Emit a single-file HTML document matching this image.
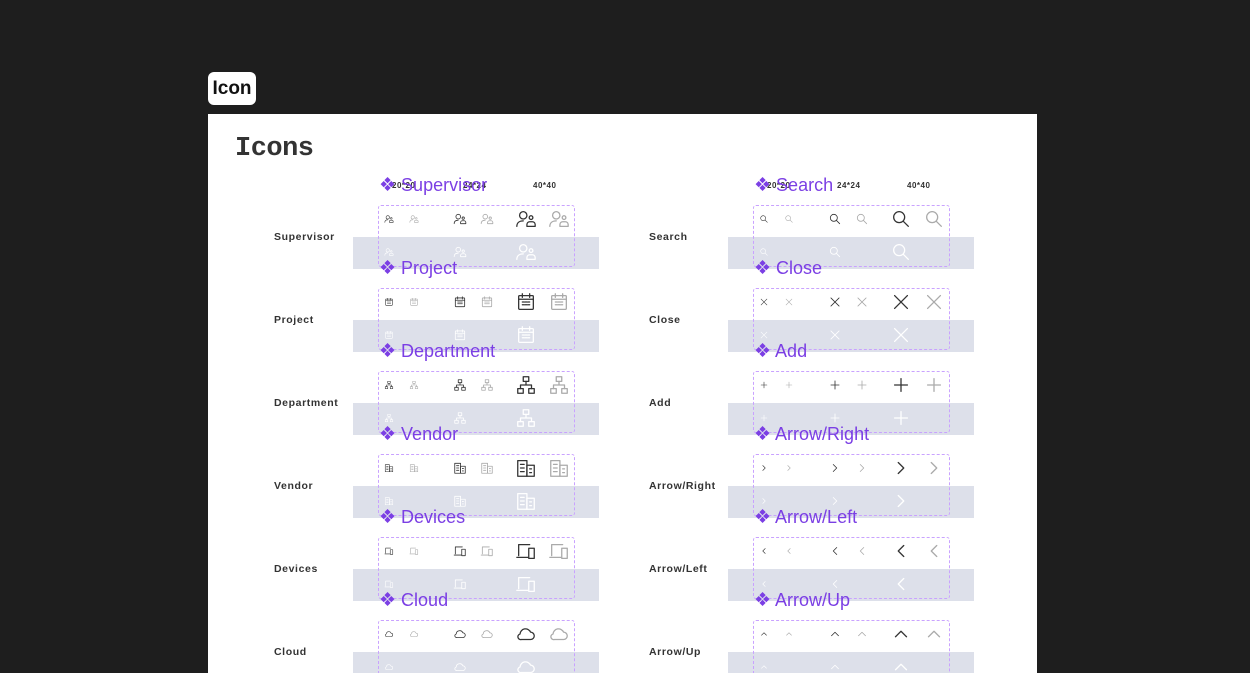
<!DOCTYPE html>
<html style="overflow:hidden"><head><meta charset="utf-8"><style>
*{margin:0;padding:0;box-sizing:border-box}
html,body{width:1250px;height:673px;overflow:hidden}
body{background:#1e1e1e;position:relative;font-family:"Liberation Sans",sans-serif}
.tab{position:absolute;left:208px;top:72px;width:48px;height:33px;background:#fff;border-radius:6px;font-size:19px;font-weight:bold;line-height:33px;text-align:center;color:#111}
.card{position:absolute;left:208px;top:114px;width:829px;height:559px;background:#fff}
h1{position:absolute;left:235px;top:134px;font-family:"Liberation Mono",monospace;font-size:27px;font-weight:bold;color:#333;letter-spacing:-0.5px}
.row{position:absolute;width:700px;height:83px}
.lbl{position:absolute;top:46px;font-size:10.5px;font-weight:bold;color:#333;letter-spacing:.6px}
.band{position:absolute;top:52px;width:246px;height:32px;background:#dde0ea}
.box{position:absolute;top:20px;width:197px;height:62px;border:1px dashed #c9a2ff;border-radius:3px}
.tt{position:absolute;top:-11px;font-size:18px;color:#7b3fe4;white-space:nowrap}
.tt b{font-size:19px;font-weight:normal}
.hd{position:absolute;top:-4px;font-size:8px;font-weight:bold;color:#333;letter-spacing:.5px}
svg{position:absolute;fill:none;stroke-width:1.4;stroke-linecap:round;stroke-linejoin:round}
.d{stroke:#333}.g{stroke:#aaa}.w{stroke:#fff}
</style></head><body>
<svg width="0" height="0" style="position:absolute">
<defs>
<symbol id="sup" viewBox="0 0 24 24"><circle cx="9" cy="8" r="4"/><path d="M2 20c0-4 3-6 7-6"/><path d="M13 20h9v-2a3 3 0 0 0-3-3h-3a3 3 0 0 0-3 3z"/><circle cx="17.5" cy="10.5" r="2"/></symbol>
<symbol id="sea" viewBox="0 0 24 24"><circle cx="10" cy="10" r="6"/><path d="M14.5 14.5L20 20"/></symbol>
<symbol id="pro" viewBox="0 0 24 24"><rect x="4" y="5" width="16" height="15" rx="1"/><path d="M4 9h16M8 3v4M16 3v4M8 12h2M11 12h2M14 12h2M8 15h2M11 15h2M14 15h2"/></symbol>
<symbol id="clo" viewBox="0 0 24 24"><path d="M5 5L19 19M19 5L5 19"/></symbol>
<symbol id="dep" viewBox="0 0 24 24"><rect x="9" y="3" width="6" height="5"/><rect x="3" y="16" width="6" height="5"/><rect x="15" y="16" width="6" height="5"/><path d="M12 8v4M6 16v-4h12v4"/></symbol>
<symbol id="add" viewBox="0 0 24 24"><path d="M12 5v14M5 12h14"/></symbol>
<symbol id="ven" viewBox="0 0 24 24"><rect x="3" y="4" width="10" height="17"/><rect x="13" y="9" width="8" height="12"/><path d="M6 8h4M6 12h4M6 16h4M16 13h2M16 17h2"/></symbol>
<symbol id="ar" viewBox="0 0 24 24"><path d="M9 6l6 6-6 6"/></symbol>
<symbol id="dev" viewBox="0 0 24 24"><path d="M4 17V5h12M2 19h12"/><rect x="15" y="9" width="6" height="11"/></symbol>
<symbol id="al" viewBox="0 0 24 24"><path d="M15 6l-6 6 6 6"/></symbol>
<symbol id="cld" viewBox="0 0 24 24"><path d="M7 18h10a4 4 0 0 0 0-8 6 6 0 0 0-11.5 2A3 3 0 0 0 7 18z"/></symbol>
<symbol id="au" viewBox="0 0 24 24"><path d="M6 15l6-6 6 6"/></symbol>
</defs></svg>
<div class="tab">Icon</div>
<div class="card"></div>
<h1>Icons</h1>

<div class="row" style="left:0;top:185px">
<div class="lbl" style="left:274px">Supervisor</div><div class="band" style="left:353px"></div><div class="box" style="left:378px"></div>
<div class="hd" style="left:392px">20*20</div><div class="hd" style="left:463px">24*24</div><div class="hd" style="left:533px">40*40</div>
<div class="tt" style="left:379px"><b>❖</b> Supervisor</div>
<svg class="d" style="left:384px;top:29px" width="10" height="10"><use href="#sup"/></svg><svg class="g" style="left:409px;top:29px" width="10" height="10"><use href="#sup"/></svg><svg class="d" style="left:453px;top:27px" width="14" height="14"><use href="#sup"/></svg><svg class="g" style="left:480px;top:27px" width="14" height="14"><use href="#sup"/></svg><svg class="d" style="left:515px;top:23px" width="22" height="22"><use href="#sup"/></svg><svg class="g" style="left:548px;top:23px" width="22" height="22"><use href="#sup"/></svg>
<svg class="w" style="left:384px;top:62px" width="10" height="10"><use href="#sup"/></svg><svg class="w" style="left:453px;top:60px" width="14" height="14"><use href="#sup"/></svg><svg class="w" style="left:515px;top:56px" width="22" height="22"><use href="#sup"/></svg>
<div class="lbl" style="left:649px">Search</div><div class="band" style="left:728px"></div><div class="box" style="left:753px"></div>
<div class="hd" style="left:767px">20*20</div><div class="hd" style="left:837px">24*24</div><div class="hd" style="left:907px">40*40</div>
<div class="tt" style="left:754px"><b>❖</b> Search</div>
<svg class="d" style="left:759px;top:29px" width="10" height="10"><use href="#sea"/></svg><svg class="g" style="left:784px;top:29px" width="10" height="10"><use href="#sea"/></svg><svg class="d" style="left:828px;top:27px" width="14" height="14"><use href="#sea"/></svg><svg class="g" style="left:855px;top:27px" width="14" height="14"><use href="#sea"/></svg><svg class="d" style="left:890px;top:23px" width="22" height="22"><use href="#sea"/></svg><svg class="g" style="left:923px;top:23px" width="22" height="22"><use href="#sea"/></svg>
<svg class="w" style="left:759px;top:62px" width="10" height="10"><use href="#sea"/></svg><svg class="w" style="left:828px;top:60px" width="14" height="14"><use href="#sea"/></svg><svg class="w" style="left:890px;top:56px" width="22" height="22"><use href="#sea"/></svg>
</div>

<div class="row" style="left:0;top:268px">
<div class="lbl" style="left:274px">Project</div><div class="band" style="left:353px"></div><div class="box" style="left:378px"></div>
<div class="tt" style="left:379px"><b>❖</b> Project</div>
<svg class="d" style="left:384px;top:29px" width="10" height="10"><use href="#pro"/></svg><svg class="g" style="left:409px;top:29px" width="10" height="10"><use href="#pro"/></svg><svg class="d" style="left:453px;top:27px" width="14" height="14"><use href="#pro"/></svg><svg class="g" style="left:480px;top:27px" width="14" height="14"><use href="#pro"/></svg><svg class="d" style="left:515px;top:23px" width="22" height="22"><use href="#pro"/></svg><svg class="g" style="left:548px;top:23px" width="22" height="22"><use href="#pro"/></svg>
<svg class="w" style="left:384px;top:62px" width="10" height="10"><use href="#pro"/></svg><svg class="w" style="left:453px;top:60px" width="14" height="14"><use href="#pro"/></svg><svg class="w" style="left:515px;top:56px" width="22" height="22"><use href="#pro"/></svg>
<div class="lbl" style="left:649px">Close</div><div class="band" style="left:728px"></div><div class="box" style="left:753px"></div>
<div class="tt" style="left:754px"><b>❖</b> Close</div>
<svg class="d" style="left:759px;top:29px" width="10" height="10"><use href="#clo"/></svg><svg class="g" style="left:784px;top:29px" width="10" height="10"><use href="#clo"/></svg><svg class="d" style="left:828px;top:27px" width="14" height="14"><use href="#clo"/></svg><svg class="g" style="left:855px;top:27px" width="14" height="14"><use href="#clo"/></svg><svg class="d" style="left:890px;top:23px" width="22" height="22"><use href="#clo"/></svg><svg class="g" style="left:923px;top:23px" width="22" height="22"><use href="#clo"/></svg>
<svg class="w" style="left:759px;top:62px" width="10" height="10"><use href="#clo"/></svg><svg class="w" style="left:828px;top:60px" width="14" height="14"><use href="#clo"/></svg><svg class="w" style="left:890px;top:56px" width="22" height="22"><use href="#clo"/></svg>
</div>

<div class="row" style="left:0;top:351px">
<div class="lbl" style="left:274px">Department</div><div class="band" style="left:353px"></div><div class="box" style="left:378px"></div>
<div class="tt" style="left:379px"><b>❖</b> Department</div>
<svg class="d" style="left:384px;top:29px" width="10" height="10"><use href="#dep"/></svg><svg class="g" style="left:409px;top:29px" width="10" height="10"><use href="#dep"/></svg><svg class="d" style="left:453px;top:27px" width="14" height="14"><use href="#dep"/></svg><svg class="g" style="left:480px;top:27px" width="14" height="14"><use href="#dep"/></svg><svg class="d" style="left:515px;top:23px" width="22" height="22"><use href="#dep"/></svg><svg class="g" style="left:548px;top:23px" width="22" height="22"><use href="#dep"/></svg>
<svg class="w" style="left:384px;top:62px" width="10" height="10"><use href="#dep"/></svg><svg class="w" style="left:453px;top:60px" width="14" height="14"><use href="#dep"/></svg><svg class="w" style="left:515px;top:56px" width="22" height="22"><use href="#dep"/></svg>
<div class="lbl" style="left:649px">Add</div><div class="band" style="left:728px"></div><div class="box" style="left:753px"></div>
<div class="tt" style="left:754px"><b>❖</b> Add</div>
<svg class="d" style="left:759px;top:29px" width="10" height="10"><use href="#add"/></svg><svg class="g" style="left:784px;top:29px" width="10" height="10"><use href="#add"/></svg><svg class="d" style="left:828px;top:27px" width="14" height="14"><use href="#add"/></svg><svg class="g" style="left:855px;top:27px" width="14" height="14"><use href="#add"/></svg><svg class="d" style="left:890px;top:23px" width="22" height="22"><use href="#add"/></svg><svg class="g" style="left:923px;top:23px" width="22" height="22"><use href="#add"/></svg>
<svg class="w" style="left:759px;top:62px" width="10" height="10"><use href="#add"/></svg><svg class="w" style="left:828px;top:60px" width="14" height="14"><use href="#add"/></svg><svg class="w" style="left:890px;top:56px" width="22" height="22"><use href="#add"/></svg>
</div>

<div class="row" style="left:0;top:434px">
<div class="lbl" style="left:274px">Vendor</div><div class="band" style="left:353px"></div><div class="box" style="left:378px"></div>
<div class="tt" style="left:379px"><b>❖</b> Vendor</div>
<svg class="d" style="left:384px;top:29px" width="10" height="10"><use href="#ven"/></svg><svg class="g" style="left:409px;top:29px" width="10" height="10"><use href="#ven"/></svg><svg class="d" style="left:453px;top:27px" width="14" height="14"><use href="#ven"/></svg><svg class="g" style="left:480px;top:27px" width="14" height="14"><use href="#ven"/></svg><svg class="d" style="left:515px;top:23px" width="22" height="22"><use href="#ven"/></svg><svg class="g" style="left:548px;top:23px" width="22" height="22"><use href="#ven"/></svg>
<svg class="w" style="left:384px;top:62px" width="10" height="10"><use href="#ven"/></svg><svg class="w" style="left:453px;top:60px" width="14" height="14"><use href="#ven"/></svg><svg class="w" style="left:515px;top:56px" width="22" height="22"><use href="#ven"/></svg>
<div class="lbl" style="left:649px">Arrow/Right</div><div class="band" style="left:728px"></div><div class="box" style="left:753px"></div>
<div class="tt" style="left:754px"><b>❖</b> Arrow/Right</div>
<svg class="d" style="left:759px;top:29px" width="10" height="10"><use href="#ar"/></svg><svg class="g" style="left:784px;top:29px" width="10" height="10"><use href="#ar"/></svg><svg class="d" style="left:828px;top:27px" width="14" height="14"><use href="#ar"/></svg><svg class="g" style="left:855px;top:27px" width="14" height="14"><use href="#ar"/></svg><svg class="d" style="left:890px;top:23px" width="22" height="22"><use href="#ar"/></svg><svg class="g" style="left:923px;top:23px" width="22" height="22"><use href="#ar"/></svg>
<svg class="w" style="left:759px;top:62px" width="10" height="10"><use href="#ar"/></svg><svg class="w" style="left:828px;top:60px" width="14" height="14"><use href="#ar"/></svg><svg class="w" style="left:890px;top:56px" width="22" height="22"><use href="#ar"/></svg>
</div>

<div class="row" style="left:0;top:517px">
<div class="lbl" style="left:274px">Devices</div><div class="band" style="left:353px"></div><div class="box" style="left:378px"></div>
<div class="tt" style="left:379px"><b>❖</b> Devices</div>
<svg class="d" style="left:384px;top:29px" width="10" height="10"><use href="#dev"/></svg><svg class="g" style="left:409px;top:29px" width="10" height="10"><use href="#dev"/></svg><svg class="d" style="left:453px;top:27px" width="14" height="14"><use href="#dev"/></svg><svg class="g" style="left:480px;top:27px" width="14" height="14"><use href="#dev"/></svg><svg class="d" style="left:515px;top:23px" width="22" height="22"><use href="#dev"/></svg><svg class="g" style="left:548px;top:23px" width="22" height="22"><use href="#dev"/></svg>
<svg class="w" style="left:384px;top:62px" width="10" height="10"><use href="#dev"/></svg><svg class="w" style="left:453px;top:60px" width="14" height="14"><use href="#dev"/></svg><svg class="w" style="left:515px;top:56px" width="22" height="22"><use href="#dev"/></svg>
<div class="lbl" style="left:649px">Arrow/Left</div><div class="band" style="left:728px"></div><div class="box" style="left:753px"></div>
<div class="tt" style="left:754px"><b>❖</b> Arrow/Left</div>
<svg class="d" style="left:759px;top:29px" width="10" height="10"><use href="#al"/></svg><svg class="g" style="left:784px;top:29px" width="10" height="10"><use href="#al"/></svg><svg class="d" style="left:828px;top:27px" width="14" height="14"><use href="#al"/></svg><svg class="g" style="left:855px;top:27px" width="14" height="14"><use href="#al"/></svg><svg class="d" style="left:890px;top:23px" width="22" height="22"><use href="#al"/></svg><svg class="g" style="left:923px;top:23px" width="22" height="22"><use href="#al"/></svg>
<svg class="w" style="left:759px;top:62px" width="10" height="10"><use href="#al"/></svg><svg class="w" style="left:828px;top:60px" width="14" height="14"><use href="#al"/></svg><svg class="w" style="left:890px;top:56px" width="22" height="22"><use href="#al"/></svg>
</div>

<div class="row" style="left:0;top:600px">
<div class="lbl" style="left:274px">Cloud</div><div class="band" style="left:353px"></div><div class="box" style="left:378px"></div>
<div class="tt" style="left:379px"><b>❖</b> Cloud</div>
<svg class="d" style="left:384px;top:29px" width="10" height="10"><use href="#cld"/></svg><svg class="g" style="left:409px;top:29px" width="10" height="10"><use href="#cld"/></svg><svg class="d" style="left:453px;top:27px" width="14" height="14"><use href="#cld"/></svg><svg class="g" style="left:480px;top:27px" width="14" height="14"><use href="#cld"/></svg><svg class="d" style="left:515px;top:23px" width="22" height="22"><use href="#cld"/></svg><svg class="g" style="left:548px;top:23px" width="22" height="22"><use href="#cld"/></svg>
<svg class="w" style="left:384px;top:62px" width="10" height="10"><use href="#cld"/></svg><svg class="w" style="left:453px;top:60px" width="14" height="14"><use href="#cld"/></svg><svg class="w" style="left:515px;top:56px" width="22" height="22"><use href="#cld"/></svg>
<div class="lbl" style="left:649px">Arrow/Up</div><div class="band" style="left:728px"></div><div class="box" style="left:753px"></div>
<div class="tt" style="left:754px"><b>❖</b> Arrow/Up</div>
<svg class="d" style="left:759px;top:29px" width="10" height="10"><use href="#au"/></svg><svg class="g" style="left:784px;top:29px" width="10" height="10"><use href="#au"/></svg><svg class="d" style="left:828px;top:27px" width="14" height="14"><use href="#au"/></svg><svg class="g" style="left:855px;top:27px" width="14" height="14"><use href="#au"/></svg><svg class="d" style="left:890px;top:23px" width="22" height="22"><use href="#au"/></svg><svg class="g" style="left:923px;top:23px" width="22" height="22"><use href="#au"/></svg>
<svg class="w" style="left:759px;top:62px" width="10" height="10"><use href="#au"/></svg><svg class="w" style="left:828px;top:60px" width="14" height="14"><use href="#au"/></svg><svg class="w" style="left:890px;top:56px" width="22" height="22"><use href="#au"/></svg>
</div>
</body></html>
